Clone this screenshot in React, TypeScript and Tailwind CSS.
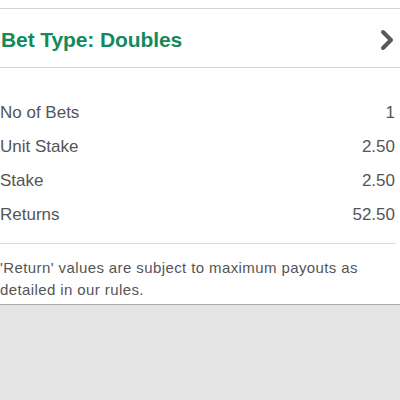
export default function App() {
  const rows: [string, string][] = [
    ["No of Bets", "1"],
    ["Unit Stake", "2.50"],
    ["Stake", "2.50"],
    ["Returns", "52.50"],
  ];
  return (
    <div
      className="w-[400px] h-[400px] bg-[#e4e4e4] flex flex-col overflow-hidden"
      style={{ fontFamily: '"Liberation Sans", Arial, sans-serif' }}
    >
      <div className="bg-white pt-[8px]">
        <div className="border-t border-[#d4d4d4]">
          <div className="h-[59px] flex items-center justify-between pl-[1px] pr-[6px] border-b border-[#d4d4d4]">
            <span className="text-[21px] font-bold text-[#138a5c] tracking-[-0.1px] mt-[3px]">
              Bet Type: Doubles
            </span>
            <svg width="14" height="22" viewBox="0 0 14 22" className="mt-[3px]">
              <polyline
                points="3,3 11,11 3,19"
                fill="none"
                stroke="#5a5a5a"
                strokeWidth="4"
                strokeLinecap="round"
                strokeLinejoin="round"
              />
            </svg>
          </div>
        </div>
        <div className="pt-[28px] pb-[11px] pr-[1px] border-b border-[#dadada] mr-[4px]">
          {rows.map(([k, v]) => (
            <div
              key={k}
              className="h-[34px] flex items-center justify-between text-[17px] text-[#555555]"
            >
              <span>{k}</span>
              <span>{v}</span>
            </div>
          ))}
        </div>
        <div className="pt-[13px] pb-[3px] text-[15px] tracking-[0.4px] leading-[22px] text-[#555555] border-b border-[#a8a8a8]">
          'Return' values are subject to maximum payouts as
          <br />
          detailed in our rules.
        </div>
      </div>
    </div>
  );
}
